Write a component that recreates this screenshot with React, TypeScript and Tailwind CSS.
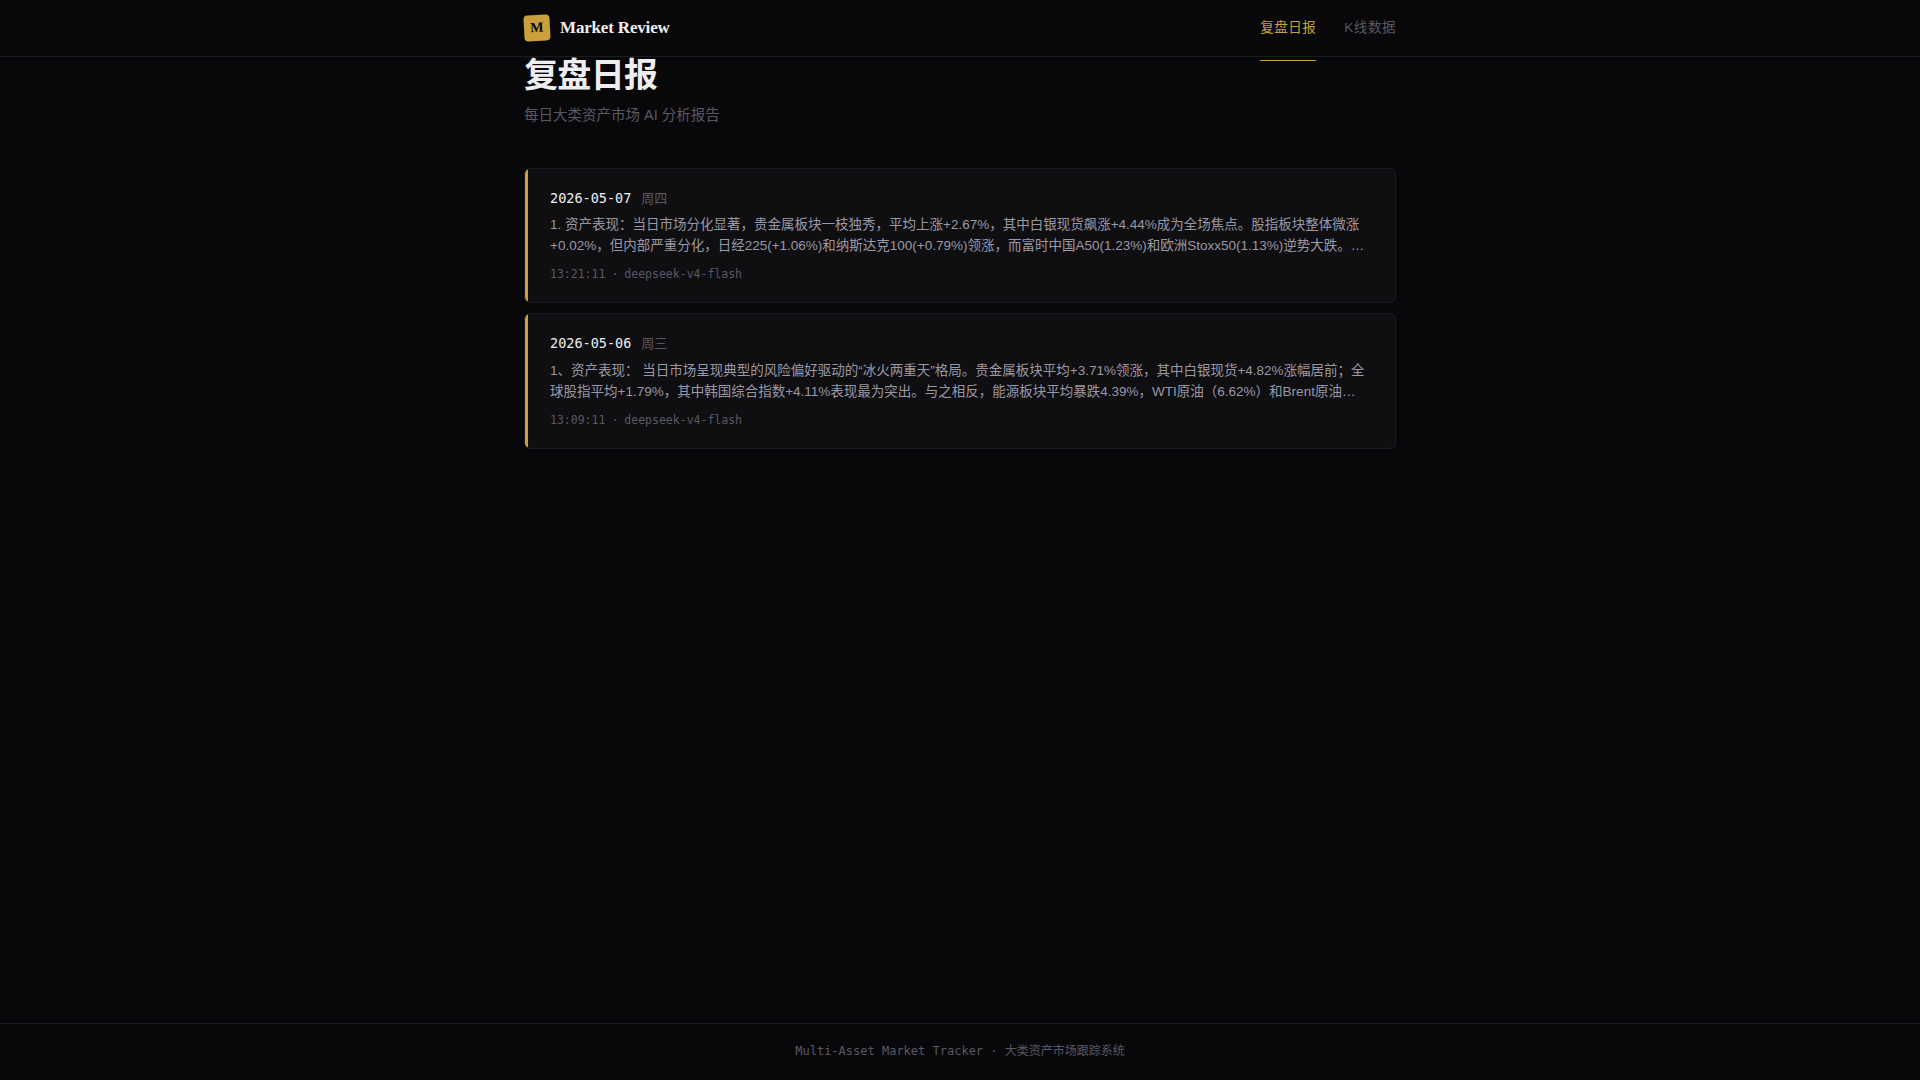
interface Report {
  date: string;
  weekday: string;
  summary: string;
  time: string;
  model: string;
}

const reports: Report[] = [
  {
    date: "2026-05-07",
    weekday: "周四",
    summary:
      "1. 资产表现：当日市场分化显著，贵金属板块一枝独秀，平均上涨+2.67%，其中白银现货飙涨+4.44%成为全场焦点。股指板块整体微涨+0.02%，但内部严重分化，日经225(+1.06%)和纳斯达克100(+0.79%)领涨，而富时中国A50(1.23%)和欧洲Stoxx50(1.13%)逆势大跌。…",
    time: "13:21:11",
    model: "deepseek-v4-flash",
  },
  {
    date: "2026-05-06",
    weekday: "周三",
    summary:
      "1、资产表现： 当日市场呈现典型的风险偏好驱动的“冰火两重天”格局。贵金属板块平均+3.71%领涨，其中白银现货+4.82%涨幅居前；全球股指平均+1.79%，其中韩国综合指数+4.11%表现最为突出。与之相反，能源板块平均暴跌4.39%，WTI原油（6.62%）和Brent原油…",
    time: "13:09:11",
    model: "deepseek-v4-flash",
  },
];

function ReportCard({ report }: { report: Report }) {
  return (
    <a
      href="#"
      className="relative block h-[135.6px] overflow-hidden rounded-[6px] border border-[#1a1a22] bg-[#0f0f12] pt-[19px] pr-6 pl-[25px]"
    >
      <span className="absolute inset-y-0 left-0 w-[3px] bg-[#c9a03c]" />
      <div className="flex h-5 items-baseline gap-[10px]">
        <span className="font-['DejaVu_Sans_Mono',monospace] text-[13.5px] text-[#eeeef0]">{report.date}</span>
        <span className="text-[13px] text-[#5a5866]">{report.weekday}</span>
      </div>
      <p className="mt-[7.5px] line-clamp-2 text-[13.5px] leading-[1.55] text-[#9a98a6]">{report.summary}</p>
      <div className="mt-[9.1px] flex gap-[6px] font-['DejaVu_Sans_Mono',monospace] text-[11.5px] leading-4 text-[#5a5866]">
        <span>{report.time}</span>
        <span>·</span>
        <span>{report.model}</span>
      </div>
    </a>
  );
}

export default function App() {
  return (
    <div className="flex min-h-screen flex-col bg-[#08080a] font-['Liberation_Sans','Noto_Sans_CJK_SC',sans-serif] text-[#eeeef0]">
      {/* Header */}
      <header className="h-[57px] border-b border-[#1a1a22]">
        <div className="mx-auto flex h-14 max-w-[920px] items-center justify-between px-6">
          <a href="#" className="flex items-center gap-[10px]">
            <span className="flex h-[26px] w-[26px] -rotate-3 items-center justify-center rounded-[4px] bg-[#c9a03c] pb-px font-['Liberation_Serif',serif] text-[14px] font-bold text-[#08080a]">
              M
            </span>
            <span className="font-['Liberation_Serif',serif] text-[17px] font-bold tracking-[-0.01em]">Market Review</span>
          </a>
          <nav className="flex gap-7 text-[13.5px] tracking-[0.04em]">
            <a href="#" className="relative leading-5 text-[#c9a03c]">
              复盘日报
              <span className="absolute inset-x-0 top-[42px] h-px bg-[#c9a03c]" />
            </a>
            <a href="#" className="leading-5 text-[#5a5866]">
              K线数据
            </a>
          </nav>
        </div>
      </header>

      {/* Report list */}
      <main className="mx-auto w-full max-w-[920px] flex-1 px-6">
        <h1 className="h-[42px] text-[34px] leading-[36px] font-bold tracking-[-0.02em]">复盘日报</h1>
        <p className="mt-[5px] text-[14.5px] leading-[22px] text-[#5a5866]">每日大类资产市场 AI 分析报告</p>
        <div className="mt-[41.7px] flex flex-col gap-[10px]">
          {reports.map((report) => (
            <ReportCard key={report.date} report={report} />
          ))}
        </div>
      </main>

      {/* Footer */}
      <footer className="h-[57px] border-t border-[#1a1a22] pt-[17px] text-center font-['DejaVu_Sans_Mono','Noto_Sans_CJK_SC',monospace] text-[12px] leading-5 text-[#5a5866]">
        Multi-Asset Market Tracker · 大类资产市场跟踪系统
      </footer>
    </div>
  );
}
